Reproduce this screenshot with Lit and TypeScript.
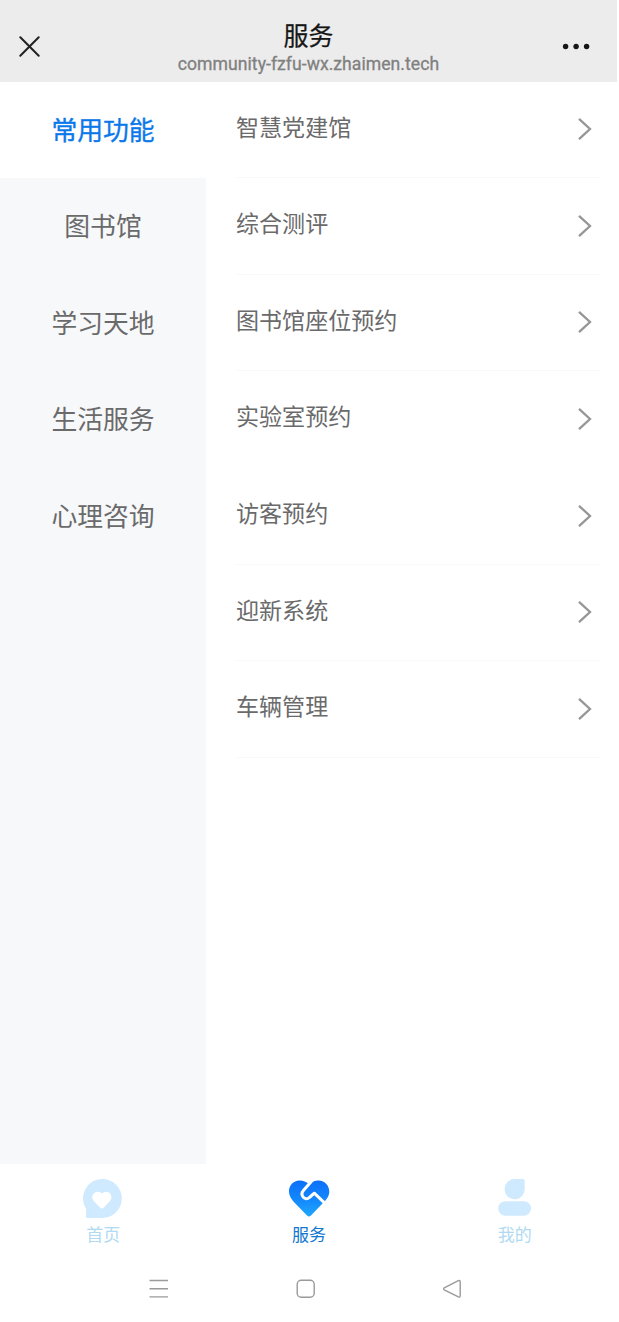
import { LitElement, html, css, svg } from "lit";
import { customElement, state } from "lit/decorators.js";
import { classMap } from "lit/directives/class-map.js";

const CATEGORIES = ["常用功能", "图书馆", "学习天地", "生活服务", "心理咨询"];

const SERVICES = [
  { label: "智慧党建馆", line: true },
  { label: "综合测评", line: true },
  { label: "图书馆座位预约", line: true },
  { label: "实验室预约", line: false },
  { label: "访客预约", line: true },
  { label: "迎新系统", line: true },
  { label: "车辆管理", line: true },
];

const homeIcon = svg`
  <path fill="#cfeafe" d="M21.4 3.5A19.4 19.4 0 1 1 21.4 42.3H6.4Q4.9 42.3 5 40.6L5.3 33.6A19.4 19.4 0 0 1 21.4 3.5Z"/>
  <path fill="#fff" d="M20.9 33Q20 33 19 32L13.2 26C9 21.2 12.6 15.8 16.8 16.1C18.8 16.3 20.2 17.1 20.9 17.8C21.6 17.1 23 16.3 25 16.1C29.2 15.8 32.8 21.2 28.6 26L22.8 32Q21.8 33 20.9 33Z"/>`;

const serviceIcon = svg`
  <defs>
    <linearGradient id="g" x1="0.5" y1="0" x2="0.5" y2="1">
      <stop offset="0" stop-color="#0d70f8"/>
      <stop offset="0.5" stop-color="#1286fc"/>
      <stop offset="1" stop-color="#20a8fe"/>
    </linearGradient>
  </defs>
  <path fill="url(#g)" d="M13.4 4.9C17 4.8 20 6 23 8.6C26 6 29 4.8 32.6 4.9C41.4 5.2 46 14.6 41.6 21.8Q40.4 23.8 38.4 26L25 40Q23 41.8 21 40L7.4 25.8C-1.2 16.8 3.8 5.2 13.4 4.9Z"/>
  <path fill="none" stroke="#fff" stroke-width="3" stroke-linejoin="round" d="M26.4 4.6L17.4 14.9C13.4 19.8 19.2 25.8 23.4 21.9L28.3 17.6L39.5 28.2"/>`;

const mineIcon = svg`
  <path fill="#cfeafe" d="M22.6 3.5H30.7Q32.7 3.5 32.7 5.5V13.4A10.1 10.1 0 1 1 22.6 3.5Z"/>
  <rect fill="#cfeafe" x="6.2" y="25.6" width="32.8" height="14.6" rx="7.3"/>`;

const TABS = [
  { label: "首页", icon: homeIcon },
  { label: "服务", icon: serviceIcon },
  { label: "我的", icon: mineIcon },
];

@customElement("app-root")
export class AppRoot extends LitElement {
  @state() private category = 0;
  @state() private tab = 1;

  static styles = css`
    :host {
      display: flex;
      flex-direction: column;
      box-sizing: border-box;
      height: 1322px;
      width: 619px;
      padding-right: 2px;
      background: #fff;
      font-family: "Noto Sans CJK SC", sans-serif;
      font-weight: 400;
      color: #6a6a6b;
    }
    svg { display: block; }
    .header {
      flex: none;
      height: 81.5px;
      box-sizing: border-box;
      display: grid;
      grid-template-columns: 60px 1fr 60px;
      background: #ececec;
    }
    .close { padding: 36px 0 0 19px; }
    .more { padding: 43px 0 0 5px; }
    .heading { text-align: center; padding-top: 18px; }
    .title {
      font-size: 25px;
      line-height: 32px;
      color: #161616;
      -webkit-text-stroke: 0.25px #161616;
    }
    .host-name {
      font-family: Roboto, sans-serif;
      font-size: 17.6px;
      line-height: 22px;
      padding-top: 3px;
      letter-spacing: 0.04px;
      color: #808080;
      -webkit-text-stroke: 0.3px #808080;
      white-space: nowrap;
    }
    .body { flex: none; height: 1082px; display: flex; }
    .side { width: 206px; background: #f7f8fa; }
    .cat {
      height: 96.65px;
      line-height: 94px;
      text-align: center;
      font-size: 25.8px;
    }
    .cat.active { background: #fff; color: #0b78ea; -webkit-text-stroke: 0.35px #0b78ea; }
    .list { flex: 1; padding: 0 17px 0 30px; }
    .row {
      height: 96.65px;
      box-sizing: border-box;
      display: flex;
      justify-content: space-between;
      border-bottom: 1px solid transparent;
      font-size: 23.05px;
      line-height: 89px;
    }
    .row.line { border-bottom-color: #f9f9f9; }
    .arrow { padding: 35.5px 7px 0 0; }
    .tabs { flex: none; height: 91px; display: grid; grid-template-columns: repeat(3, 1fr); }
    .tab {
      display: flex;
      flex-direction: column;
      align-items: center;
      padding-top: 12px;
      font-size: 17px;
      line-height: 24px;
      color: #b1daf2;
    }
    .tab svg { margin-bottom: 2px; }
    .tab span { padding-left: 1px; }
    .tab.active { color: #1177cf; }
    .system {
      flex: 1;
      display: flex;
      justify-content: space-between;
      padding: 24px 155px 0 148px;
    }
  `;

  render() {
    return html`
      <div class="header">
        <div class="close">
          <svg width="21" height="21" viewBox="0 0 21 21" fill="none" stroke="#222" stroke-width="2" stroke-linecap="round">
            <path d="M1.3 1.3L19.7 19.7M19.7 1.3L1.3 19.7" />
          </svg>
        </div>
        <div class="heading">
          <div class="title">服务</div>
          <div class="host-name">community-fzfu-wx.zhaimen.tech</div>
        </div>
        <div class="more">
          <svg width="28" height="7" viewBox="0 0 28 7" fill="#161616">
            <circle cx="3.6" cy="3.5" r="2.7" /><circle cx="14.1" cy="3.5" r="2.7" /><circle cx="24.6" cy="3.5" r="2.7" />
          </svg>
        </div>
      </div>
      <div class="body">
        <div class="side">
          ${CATEGORIES.map((c, i) => html`
            <div class=${classMap({ cat: true, active: i === this.category })} @click=${() => (this.category = i)}>${c}</div>`)}
        </div>
        <div class="list">
          ${SERVICES.map((s) => html`
            <div class=${classMap({ row: true, line: s.line })}>
              <span>${s.label}</span>
              <span class="arrow">
                <svg width="16" height="24" viewBox="0 0 16 24" fill="none" stroke="#969696" stroke-width="2.3">
                  <path d="M2 1.8L13 12L2 22.2" />
                </svg>
              </span>
            </div>`)}
        </div>
      </div>
      <div class="tabs">
        ${TABS.map((t, i) => html`
          <div class=${classMap({ tab: true, active: i === this.tab })} @click=${() => (this.tab = i)}>
            <svg width="44" height="44" viewBox="0 0.4 44 44">${t.icon}</svg>
            <span>${t.label}</span>
          </div>`)}
      </div>
      <div class="system">
        <svg width="20" height="20" viewBox="0 0 20 20" fill="none" stroke="#9a9a9a" stroke-width="1.4">
          <path d="M1.5 1.5H20M1.5 9.7H20M1.5 17.9H20" />
        </svg>
        <svg width="20" height="20" viewBox="0 0 20 20" fill="none" stroke="#9a9a9a" stroke-width="1.4">
          <rect x="2.2" y="1.2" width="17" height="17" rx="4" />
        </svg>
        <svg width="20" height="20" viewBox="0 0 20 20" fill="none" stroke="#9a9a9a" stroke-width="1.4" stroke-linejoin="round">
          <path d="M16.4 1.7Q18.2 1 18.2 2.8V16.8Q18.2 18.6 16.4 17.9L2.2 10.8Q1 9.8 2.2 8.8Z" />
        </svg>
      </div>
    `;
  }
}
